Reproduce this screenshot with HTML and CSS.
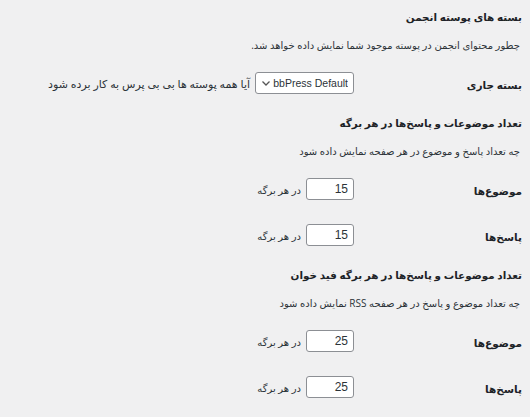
FILE: index.html
```html
<!DOCTYPE html>
<html lang="fa" dir="rtl">
<head>
<meta charset="utf-8">
<title>تنظیمات پوسته انجمن</title>
<link rel="stylesheet" href="styles.css">
</head>
<body>
<div class="wrap">
  <h3 class="sec-title">بسته های پوسته انجمن</h3>
  <p class="sec-desc">چطور محتوای انجمن در پوسته موجود شما نمایش داده خواهد شد.</p>
  <div class="row row-first">
    <div class="label">بسته جاری</div>
    <div class="field">
      <select class="select"><option>bbPress Default</option></select>
      <label class="note note-wide">آیا همه پوسته ها بی بی پرس به کار برده شود</label>
    </div>
  </div>

  <h3 class="sec-title">تعداد موضوعات و پاسخ‌ها در هر برگه</h3>
  <p class="sec-desc">چه تعداد پاسخ و موضوع در هر صفحه نمایش داده شود</p>
  <div class="row row-first">
    <div class="label">موضوع‌ها</div>
    <div class="field">
      <input class="num" type="text" value="15">
      <span class="note">در هر برگه</span>
    </div>
  </div>
  <div class="row">
    <div class="label">پاسخ‌ها</div>
    <div class="field">
      <input class="num" type="text" value="15">
      <span class="note">در هر برگه</span>
    </div>
  </div>

  <h3 class="sec-title">تعداد موضوعات و پاسخ‌ها در هر برگه فید خوان</h3>
  <p class="sec-desc">چه تعداد موضوع و پاسخ در هر صفحه RSS نمایش داده شود</p>
  <div class="row row-first">
    <div class="label">موضوع‌ها</div>
    <div class="field">
      <input class="num" type="text" value="25">
      <span class="note">در هر برگه</span>
    </div>
  </div>
  <div class="row">
    <div class="label">پاسخ‌ها</div>
    <div class="field">
      <input class="num" type="text" value="25">
      <span class="note">در هر برگه</span>
    </div>
  </div>
</div>
</body>
</html>
```

FILE: styles.css
```css
html, body {
  margin: 0;
  padding: 0;
  background: #f0f0f1;
}
body {
  direction: rtl;
  font-family: "Open Sans", "DejaVu Sans", sans-serif;
  color: #1d2327;
  font-size: 11px;
}
.wrap {
  padding: 0 8px 0 0;
}
.sec-title {
  margin: 21px 0 0 0;
  font-size: 10.4px;
  font-weight: bold;
  line-height: 16px;
  color: #1d2327;
}
.sec-title:first-child {
  margin-top: 9px;
}
.sec-desc {
  margin: 12px 2px 0 0;
  font-size: 10px;
  line-height: 16px;
  color: #2c3338;
}
.row {
  display: flex;
  align-items: center;
  margin-top: 24px;
  height: 22px;
}
.row-first {
  margin-top: 19px;
}
.label {
  width: 158px;
  margin-left: 10px;
  flex: none;
  font-weight: bold;
  font-size: 10.5px;
  line-height: 16px;
  padding-top: 3px;
  color: #1d2327;
}
.field {
  display: flex;
  align-items: center;
  gap: 5px;
}
.note {
  font-size: 10px;
  line-height: 16px;
  color: #2c3338;
  padding-top: 1px;
}
.note-wide {
  font-size: 11px;
}
.num {
  box-sizing: border-box;
  width: 48px;
  height: 22px;
  margin: 0;
  padding: 0 5px;
  border: 1px solid #8c8f94;
  border-radius: 3px;
  background: #fff;
  font-family: "Liberation Sans", sans-serif;
  font-size: 12px;
  color: #2c3338;
  text-align: right;
  direction: ltr;
}
.select {
  box-sizing: border-box;
  width: 99px;
  height: 22px;
  margin: 0;
  padding: 0 5px 0 15px;
  border: 1px solid #8c8f94;
  border-radius: 3px;
  background: #fff url("data:image/svg+xml;charset=utf8,%3Csvg xmlns='http://www.w3.org/2000/svg' width='10' height='10' viewBox='0 0 10 10'%3E%3Cpath d='M1.5 3.5 L5 7 L8.5 3.5' fill='none' stroke='%23555' stroke-width='1.3'/%3E%3C/svg%3E") no-repeat left 5px center;
  -webkit-appearance: none;
  appearance: none;
  font-family: "Liberation Sans", sans-serif;
  font-size: 10.5px;
  color: #2c3338;
  direction: ltr;
  text-align: right;
}
```
